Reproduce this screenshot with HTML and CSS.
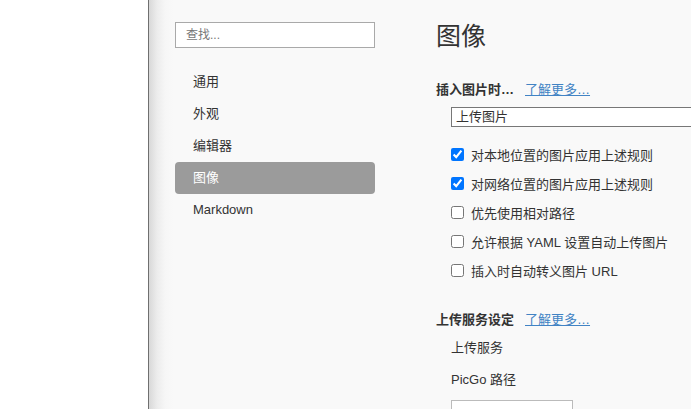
FILE: index.html
```html
<!DOCTYPE html>
<html lang="zh-CN">
<head>
<meta charset="utf-8">
<title>偏好设置 - 图像</title>
<link rel="stylesheet" href="styles.css">
</head>
<body>
<div class="desktop"></div>
<div class="window">
  <aside class="sidebar">
    <input class="search" type="text" placeholder="查找...">
    <nav class="nav">
      <div class="nav-item">通用</div>
      <div class="nav-item">外观</div>
      <div class="nav-item">编辑器</div>
      <div class="nav-item active">图像</div>
      <div class="nav-item">Markdown</div>
    </nav>
  </aside>
  <main class="content">
    <h1 class="title">图像</h1>
    <div class="section-head">
      <span class="section-label">插入图片时…</span>
      <a class="more" href="#">了解更多…</a>
    </div>
    <div class="select">上传图片</div>
    <div class="checks">
      <label class="check"><input type="checkbox" checked><span>对本地位置的图片应用上述规则</span></label>
      <label class="check"><input type="checkbox" checked><span>对网络位置的图片应用上述规则</span></label>
      <label class="check"><input type="checkbox"><span>优先使用相对路径</span></label>
      <label class="check"><input type="checkbox"><span>允许根据 YAML 设置自动上传图片</span></label>
      <label class="check"><input type="checkbox"><span>插入时自动转义图片 URL</span></label>
    </div>
    <div class="section-head upload">
      <span class="section-label">上传服务设定</span>
      <a class="more" href="#">了解更多…</a>
    </div>
    <div class="field">上传服务</div>
    <div class="field">PicGo 路径</div>
    <div class="path-box"></div>
  </main>
</div>
</body>
</html>
```
FILE: styles.css
```css
html, body {
  margin: 0;
  padding: 0;
  height: 100%;
  overflow: hidden;
}
body {
  display: flex;
  background: #fff;
  font-family: "Liberation Sans", "Noto Sans CJK SC", sans-serif;
  font-size: 13px;
  color: #333;
}
.desktop {
  width: 148px;
  flex: none;
  background: #fff;
}
.window {
  flex: 1;
  min-width: 0;
  height: 409px;
  overflow: hidden;
  display: flex;
  border-left: 1px solid #6f6f6f;
  background: linear-gradient(to right, #d8d8d8 0px, #ececec 8px, #f6f6f6 16px, #f9f9f9 24px) #f9f9f9;
}
.sidebar {
  width: 227px;
  flex: none;
  padding: 22px 0 0 26px;
  box-sizing: border-box;
}
.search {
  display: block;
  width: 200px;
  height: 26px;
  box-sizing: border-box;
  border: 1px solid #a9a9a9;
  background: #fff;
  padding: 0 10px;
  margin: 0;
  font-family: inherit;
  font-size: 12px;
  color: #333;
  outline: none;
}
.search::placeholder {
  color: #777;
}
.nav {
  margin-top: 18px;
  width: 200px;
}
.nav-item {
  height: 32px;
  line-height: 32px;
  padding-left: 18px;
  color: #333;
  border-radius: 4px;
}
.nav-item.active {
  background: #9b9b9b;
  color: #fff;
}
.content {
  flex: 1;
  min-width: 0;
  padding-left: 60px;
  box-sizing: border-box;
}
.title {
  margin: 20px 0 0;
  font-size: 25px;
  font-weight: 400;
  line-height: 32px;
  color: #333;
}
.section-head {
  margin-top: 27px;
  display: flex;
  align-items: center;
  gap: 11px;
  height: 18px;
}
.section-label {
  font-weight: 700;
  color: #333;
}
.more {
  color: #4183c4;
  text-decoration: underline;
}
.select {
  margin: 10px 0 0 15px;
  height: 20px;
  box-sizing: border-box;
  border: 1px solid #777;
  border-right: none;
  background: #fff;
  padding-left: 4px;
  line-height: 18px;
  color: #333;
}
.checks {
  margin: 13px 0 0 15px;
  display: flex;
  flex-direction: column;
}
.check {
  display: flex;
  align-items: center;
  height: 29px;
  color: #333;
}
.check input {
  margin: 0 7px 0 0;
  width: 13px;
  height: 13px;
  accent-color: #0075ff;
}
.section-head.upload {
  margin-top: 24px;
}
.field {
  margin: 10px 0 0 15px;
  height: 22px;
  line-height: 22px;
  color: #333;
}
.field + .field {
  margin-top: 10px;
}
.path-box {
  margin: 9px 0 0 15px;
  width: 120px;
  height: 20px;
  border: 1px solid #bbb;
  background: #fff;
}
```
